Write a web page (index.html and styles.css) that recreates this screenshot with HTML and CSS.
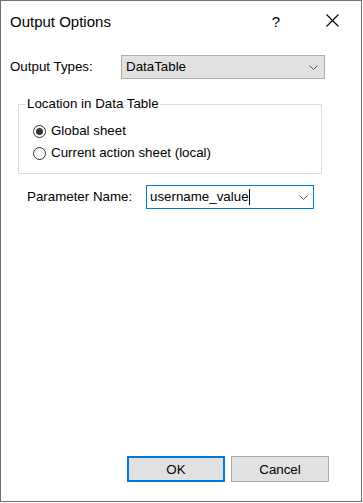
FILE: index.html
```html
<!DOCTYPE html>
<html lang="en">
<head>
    <meta charset="UTF-8">
    <meta name="viewport" content="width=device-width, initial-scale=1.0">
    <title>Output Options</title>
    <link rel="stylesheet" href="styles.css">
</head>
<body>
    <div class="dialog">
        <div class="titlebar">
            <span class="title">Output Options</span>
            <span class="help">?</span>
            <svg class="close" width="13" height="13" viewBox="0 0 13 13">
                <path d="M0.5 0.5 L12.5 12.5 M12.5 0.5 L0.5 12.5" stroke="#000" stroke-width="1.1" fill="none"/>
            </svg>
        </div>

        <div class="content">
            <div class="row type-row">
                <span class="field-label type-label">Output Types:</span>
                <div class="combo select">
                    <span>DataTable</span>
                    <svg class="chevron" width="9" height="5" viewBox="0 0 9 5">
                        <path d="M0.5 0.5 L4.5 4.5 L8.5 0.5" stroke="#5a5a5a" stroke-width="1" fill="none"/>
                    </svg>
                </div>
            </div>

            <div class="group">
                <span class="group-title">Location in Data Table</span>
                <div class="radio-row">
                    <span class="radio checked"></span>
                    <span>Global sheet</span>
                </div>
                <div class="radio-row">
                    <span class="radio"></span>
                    <span>Current action sheet (local)</span>
                </div>
            </div>

            <div class="row param-row">
                <span class="field-label param-label">Parameter Name:</span>
                <div class="combo edit">
                    <span class="value">username_value<span class="caret"></span></span>
                    <svg class="chevron" width="9" height="5" viewBox="0 0 9 5">
                        <path d="M0.5 0.5 L4.5 4.5 L8.5 0.5" stroke="#5a5a5a" stroke-width="1" fill="none"/>
                    </svg>
                </div>
            </div>
        </div>

        <div class="footer">
            <button class="btn default">OK</button>
            <button class="btn">Cancel</button>
        </div>
    </div>
</body>
</html>
```

FILE: styles.css
```css
body {
    margin: 0;
    background: #ffffff;
    font-family: "Liberation Sans", Arial, sans-serif;
    font-size: 13.33px;
    color: #000;
}
.dialog {
    width: 362px;
    height: 502px;
    box-sizing: border-box;
    border: 1px solid #717171;
    background: #ffffff;
    display: flex;
    flex-direction: column;
}
.titlebar {
    height: 40px;
    box-sizing: border-box;
    padding: 12px 22px 0 9px;
    display: flex;
    align-items: flex-start;
}
.title {
    flex: 1;
    font-size: 15px;
    line-height: 17px;
}
.help {
    font-size: 15px;
    line-height: 17px;
    margin-right: 46px;
}
.close {
    margin-top: 1px;
    display: block;
}
.content {
    padding-top: 14px;
}
.row {
    display: flex;
    align-items: center;
}
.type-row {
    padding-left: 9px;
}
.param-row {
    padding-left: 26px;
    margin-top: 11px;
}
.field-label {
    line-height: 22px;
}
.type-label {
    width: 111px;
}
.param-label {
    width: 119px;
}
.combo {
    height: 24px;
    box-sizing: border-box;
    display: flex;
    align-items: center;
    justify-content: space-between;
    line-height: 22px;
}
.select {
    width: 204px;
    background: #e1e1e1;
    border: 1px solid #adadad;
    padding: 0 6px 0 4px;
}
.edit {
    width: 168px;
    background: #fff;
    border: 1px solid #0078d7;
    padding: 0 5px 0 3px;
}
.chevron {
    display: block;
}
.value {
    position: relative;
}
.caret {
    position: absolute;
    right: -1px;
    top: 3px;
    width: 1px;
    height: 16px;
    background: #000;
}
.group {
    position: relative;
    margin: 25px 0 0 17px;
    width: 304px;
    height: 70px;
    box-sizing: border-box;
    border: 1px solid #dcdcdc;
    padding: 15px 0 9px 14px;
}
.group-title {
    position: absolute;
    top: -9px;
    left: 7px;
    padding: 0 1px;
    background: #fff;
    line-height: 15px;
}
.radio-row {
    display: flex;
    align-items: center;
    height: 22px;
    line-height: 22px;
}
.radio {
    width: 13px;
    height: 13px;
    box-sizing: border-box;
    border: 1px solid #333;
    border-radius: 50%;
    background: #fff;
    margin-right: 5px;
    position: relative;
}
.radio.checked::after {
    content: "";
    position: absolute;
    left: 2px;
    top: 2px;
    width: 7px;
    height: 7px;
    border-radius: 50%;
    background: #333;
}
.footer {
    margin-top: auto;
    display: flex;
    justify-content: flex-end;
    gap: 6px;
    padding: 0 32px 19px 0;
}
.btn {
    width: 98px;
    height: 26px;
    box-sizing: border-box;
    background: #e1e1e1;
    border: 1px solid #adadad;
    font-family: "Liberation Sans", Arial, sans-serif;
    font-size: 13.33px;
    color: #000;
    padding: 0;
}
.btn.default {
    border: 2px solid #0078d7;
}
```
